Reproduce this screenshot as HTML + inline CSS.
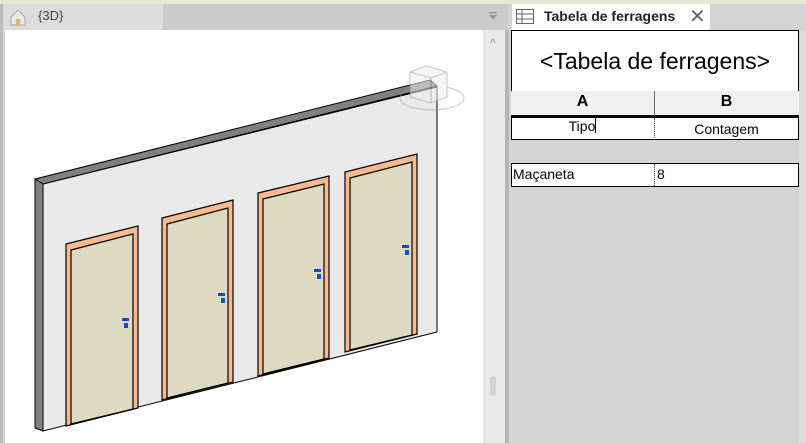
<!DOCTYPE html>
<html><head><meta charset="utf-8"><style>
*{margin:0;padding:0;box-sizing:border-box}
body{width:806px;height:443px;overflow:hidden;background:#d4d4d4;font-family:"Liberation Sans",sans-serif;position:relative}
.a{position:absolute}
</style></head><body>
<div class="a" style="left:0;top:0;width:806px;height:4px;background:#e3ead9"></div>
<div class="a" style="left:0;top:4px;width:508px;height:26px;background:#cbcbcb"></div>
<div class="a" style="left:3px;top:4px;width:160px;height:26px;background:#dcdcdc"></div>
<div class="a" style="left:0;top:4px;width:3px;height:439px;background:#bdbdbd"></div>
<svg class="a" style="left:9px;top:8px" width="18" height="18" viewBox="0 0 18 18"><path d="M2 9 L9 2 L16 9 L16 17 L2 17Z" fill="#e8e8e8" stroke="#a8a8a8"/><rect x="7" y="11" width="4" height="6" fill="#d8b860"/></svg>
<div class="a" style="left:38px;top:8px;font-size:13px;color:#444">{3D}</div>
<svg class="a" style="left:488px;top:11px" width="10" height="10"><rect x="1" y="1" width="8" height="1.5" fill="#999"/><path d="M1 4 L9 4 L5 9Z" fill="#999"/></svg>
<div class="a" style="left:5px;top:30px;width:478px;height:413px;background:#fff"></div>
<div class="a" style="left:483px;top:30px;width:22px;height:413px;background:#e8e8e8"></div>
<div class="a" style="left:490px;top:36px;font-size:12px;color:#888">^</div>
<div class="a" style="left:490px;top:376px;width:6px;height:20px;background:#d4d4d4;border-radius:3px"></div>
<div class="a" style="left:505px;top:30px;width:4px;height:413px;background:#b4b4b4"></div>
<div class="a" style="left:508px;top:4px;width:4px;height:26px;background:#d4d4d4"></div>
<svg class="a" style="left:5px;top:30px" width="478" height="413" viewBox="5 30 478 413">
<polygon points="43,184 437,87 437,332 43,431" fill="#e9e9e9" stroke="#000" stroke-width="1"/>
<polygon points="35,179 430,80 437,86 43,184" fill="#808080" stroke="#000" stroke-width="1"/>
<polygon points="35,179 43,184 43,431 35,428" fill="#808080" stroke="#000" stroke-width="1"/>
<g stroke="#000" stroke-width="1.2">
<polygon points="66,244 138,226 138,408 66,426" fill="#f8b890"/>
<polygon points="71,250 133,234 133,409 71,424" fill="#dedac2"/>
<polygon points="162,218 233,200 233,382 162,400" fill="#f8b890"/>
<polygon points="167,224 228,208 228,383 167,398" fill="#dedac2"/>
<polygon points="258,193 329,176 329,358 258,376" fill="#f8b890"/>
<polygon points="263,199 324,184 324,359 263,374" fill="#dedac2"/>
<polygon points="345,172 417,154 417,334 345,352" fill="#f8b890"/>
<polygon points="350,178 412,162 412,335 350,350" fill="#dedac2"/>
</g>
<g fill="#1646d0">
<rect x="122" y="318" width="7" height="3"/><rect x="124" y="323" width="4" height="5"/>
<rect x="218" y="293" width="7" height="3"/><rect x="221" y="298" width="4" height="5"/>
<rect x="314" y="269" width="7" height="3"/><rect x="317" y="274" width="4" height="5"/>
<rect x="402" y="245" width="7" height="3"/><rect x="405" y="250" width="4" height="5"/>
</g>
<g opacity="0.55" fill="none" stroke="#999">
<ellipse cx="432" cy="98" rx="32" ry="12"/>
<polygon points="410,72 426,66 447,72 447,97 431,103 410,97" fill="#eee"/>
<path d="M410,72 L431,78 L447,72 M431,78 L431,103"/>
</g>
</svg>
<div class="a" style="left:512px;top:4px;width:198px;height:27px;background:#fff"></div>
<svg class="a" style="left:516px;top:9px" width="18" height="16"><g fill="none" stroke="#666"><rect x="0.5" y="0.5" width="17" height="14"/><path d="M0 5H18M0 10H18M6 0V15"/></g></svg>
<div class="a" style="left:544px;top:8px;font-size:14px;font-weight:bold;color:#222">Tabela de ferragens</div>
<div class="a" style="left:689px;top:4px;font-size:20px;color:#666">✕</div>
<div class="a" style="left:799px;top:30px;width:7px;height:413px;background:#dcdcdc"></div>
<div class="a" style="left:511px;top:30px;width:288px;height:62px;background:#fff;border:1px solid #000;text-align:center;font-size:23px;line-height:60px">&lt;Tabela de ferragens&gt;</div>
<div class="a" style="left:511px;top:91px;width:288px;height:25px;background:#f0f0f0;border-bottom:1px solid #000"></div>
<div class="a" style="left:654px;top:91px;width:1px;height:25px;background:#666"></div>
<div class="a" style="left:511px;top:93px;width:143px;text-align:center;font-size:16px;font-weight:bold">A</div>
<div class="a" style="left:655px;top:93px;width:143px;text-align:center;font-size:16px;font-weight:bold">B</div>
<div class="a" style="left:511px;top:116px;width:288px;height:24px;background:#fff;border:1px solid #000;border-top:2px solid #000"></div>
<div class="a" style="left:654px;top:118px;height:22px;border-left:1px dotted #444"></div>
<div class="a" style="left:511px;top:118px;width:143px;text-align:center;font-size:14px">Tipo<span style="border-left:1px solid #000;height:15px;display:inline-block;vertical-align:-2px"></span></div>
<div class="a" style="left:655px;top:121px;width:143px;text-align:center;font-size:14px">Contagem</div>
<div class="a" style="left:511px;top:163px;width:288px;height:24px;background:#fff;border:1px solid #000"></div>
<div class="a" style="left:654px;top:164px;height:22px;border-left:1px dotted #444"></div>
<div class="a" style="left:513px;top:166px;font-size:14px">Maçaneta</div>
<div class="a" style="left:657px;top:166px;font-size:14px">8</div>
</body></html>
